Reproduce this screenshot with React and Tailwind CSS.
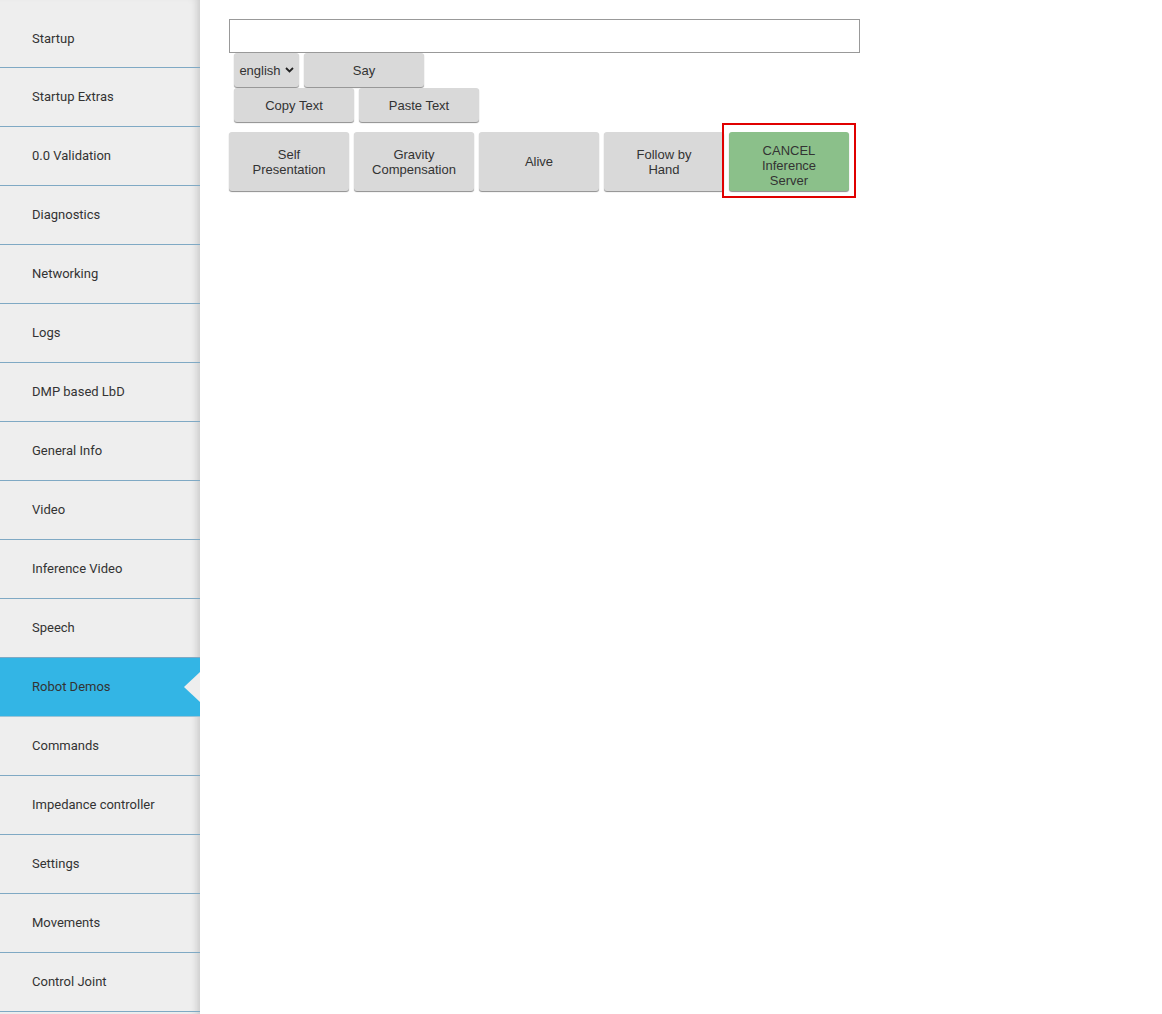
const items = ['Startup', 'Startup Extras', '0.0 Validation', 'Diagnostics', 'Networking', 'Logs', 'DMP based LbD', 'General Info', 'Video', 'Inference Video', 'Speech', 'Robot Demos', 'Commands', 'Impedance controller', 'Settings', 'Movements', 'Control Joint']

const btn = 'bg-[#d9d9d9] rounded-[3px] shadow-[0_1px_1px_rgba(0,0,0,0.45)] text-[13px] text-[#333] leading-[15px] flex items-center justify-center text-center'

export default function App() {
  return (
    <div className="flex h-[1014px] overflow-hidden bg-white" style={{ fontFamily: 'Roboto, sans-serif' }}>
      <div className="w-[200px] shrink-0 bg-[#eeeeee] shadow-[inset_-8px_0_8px_-6px_rgba(0,0,0,0.18)] flex flex-col">
        {items.map((it, i) => {
          const active = it === 'Robot Demos'
          return (
            <div
              key={it}
              className={`relative shrink-0 flex items-center pl-8 text-[13px] text-[#333] border-b ${i === 0 ? 'h-[68px] pt-[10px]' : 'h-[59px]'} ${active ? 'bg-[#33b5e5] border-[#9cc4d6]' : 'border-[#7fa9c4]'}`}
            >
              {it}
              {active && (
                <div className="absolute right-0 top-1/2 -translate-y-1/2 w-0 h-0 border-y-[15px] border-y-transparent border-r-[16px] border-r-[#eeeeee]" />
              )}
            </div>
          )
        })}
      </div>
      <div className="flex-1 pl-[29px] pt-[19px]" style={{ fontFamily: '"Liberation Sans", Arial, sans-serif' }}>
        <div className="w-[631px] h-[34px] border border-[#999] bg-white" />
        <div className="flex gap-[5px] pl-[5px] mt-0">
          <div className={`${btn} w-[65px] h-[34px] gap-1`}>
            english
            <svg width="9" height="6" viewBox="0 0 9 6"><path d="M1 1l3.5 3.5L8 1" stroke="#222" strokeWidth="1.8" fill="none" /></svg>
          </div>
          <div className={`${btn} w-[120px] h-[34px]`}>Say</div>
        </div>
        <div className="flex gap-[5px] pl-[5px] mt-[1px]">
          <div className={`${btn} w-[120px] h-[34px]`}>Copy Text</div>
          <div className={`${btn} w-[120px] h-[34px]`}>Paste Text</div>
        </div>
        <div className="flex gap-[5px] mt-[10px]">
          <div className={`${btn} w-[120px] h-[59px]`}>Self<br />Presentation</div>
          <div className={`${btn} w-[120px] h-[59px]`}>Gravity<br />Compensation</div>
          <div className={`${btn} w-[120px] h-[59px]`}>Alive</div>
          <div className={`${btn} w-[120px] h-[59px]`}>Follow by<br />Hand</div>
          <div className="relative">
            <div className={`${btn} !bg-[#8bc08a] w-[120px] h-[59px] pt-[8px] shadow-[0_0_4px_3px_rgba(140,210,240,0.8)]`}>CANCEL<br />Inference<br />Server</div>
            <div className="absolute -left-[7px] -top-[9px] w-[134px] h-[75px] border-2 border-[#e00000] pointer-events-none" />
          </div>
        </div>
      </div>
    </div>
  )
}
